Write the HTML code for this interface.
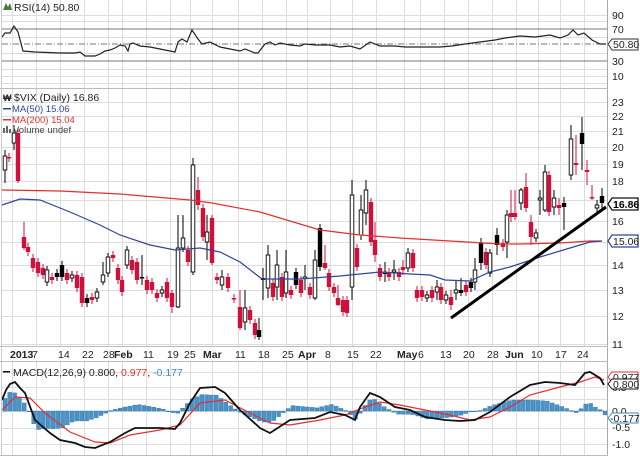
<!DOCTYPE html>
<html><head><meta charset="utf-8"><style>
html,body{margin:0;padding:0;background:#fff;width:640px;height:456px;overflow:hidden}
svg{display:block}
text{font-family:"Liberation Sans",sans-serif;font-size:10.5px}
</style></head><body>
<svg id="s" width="640" height="456" xmlns="http://www.w3.org/2000/svg">
<rect width="640" height="456" fill="#fff"/>
<g id="grid" stroke="#dcdcdc" stroke-width="1"></g>
<g id="g"></g>
<!-- RSI -->
<line x1="2" y1="29" x2="607" y2="29" stroke="#777"/>
<line x1="2" y1="61" x2="607" y2="61" stroke="#777"/>
<line x1="2" y1="44" x2="607" y2="44" stroke="#777" stroke-dasharray="6,2,1,2"/>
<polyline id="rsi" fill="none" stroke="#222" stroke-width="1.2"/>
<g id="cd"></g>
<polyline id="ma200" fill="none" stroke="#e03030" stroke-width="1.2"/>
<polyline id="ma50" fill="none" stroke="#334499" stroke-width="1.2"/>
<line x1="451" y1="318" x2="606" y2="207" stroke="#000" stroke-width="3"/>
<g id="hist"></g>
<polyline id="sig" fill="none" stroke="#e03030" stroke-width="1.2"/>
<polyline id="macd" fill="none" stroke="#111" stroke-width="1.8"/>
<!-- borders -->
<line x1="607.5" y1="0" x2="607.5" y2="456" stroke="#aaa"/>
<line x1="1.5" y1="0" x2="1.5" y2="456" stroke="#ccc"/>
<line x1="0" y1="88.5" x2="608" y2="88.5" stroke="#bbb"/>
<line x1="0" y1="346.5" x2="608" y2="346.5" stroke="#bbb"/>
<line x1="0" y1="361.5" x2="608" y2="361.5" stroke="#bbb"/>
<line x1="0" y1="455.5" x2="608" y2="455.5" stroke="#bbb"/>
<!-- legends -->
<path d="M3 10 L6 3 L8 7 L10 3 L12 10 Z" fill="#4a7a3a"/>
<text x="14" y="11" fill="#222">RSI(14) 50.80</text>
<text x="3" y="101" fill="#222" font-weight="bold" style="font-size:9px">₩</text>
<text x="14" y="101" fill="#222">$VIX (Daily) 16.86</text>
<rect x="3" y="108" width="8" height="1.5" fill="#334499"/>
<text x="12" y="112" fill="#334499" style="font-size:9.5px">MA(50) 15.06</text>
<rect x="3" y="119" width="8" height="1.5" fill="#e03030"/>
<text x="12" y="123" fill="#e03030" style="font-size:9.5px">MA(200) 15.04</text>
<rect x="3" y="128" width="2" height="5" fill="#666"/><rect x="6" y="126" width="2" height="7" fill="#666"/><rect x="9" y="129" width="2" height="4" fill="#666"/>
<text x="13" y="133" fill="#444" style="font-size:9.5px">Volume undef</text>
<rect x="3" y="371" width="7" height="1.5" fill="#111"/>
<text x="13" y="376" fill="#222">MACD(12,26,9) 0.800, <tspan fill="#e03030">0.977</tspan>, <tspan fill="#3a8ac0">-0.177</tspan></text>
<!-- right axis -->
<g fill="#222">
<text x="612" y="19">90</text><text x="612" y="33">70</text><text x="612" y="65">30</text><text x="612" y="80">10</text>
<text x="612" y="106">23</text><text x="612" y="120">22</text><text x="612" y="135">21</text><text x="612" y="151">20</text><text x="612" y="168">19</text><text x="612" y="185">18</text><text x="612" y="225">16</text><text x="612" y="269">14</text><text x="612" y="294">13</text><text x="612" y="320">12</text><text x="612" y="348">11</text>
<text x="612" y="391">0.5</text><text x="612" y="431">-0.5</text><text x="612" y="448">-1.0</text>
</g>
<g>
<path d="M608 44 L612 39 L638 39 L638 50 L612 50 Z" fill="#fff" stroke="#333"/><text x="613" y="48" fill="#222">50.80</text>
<path d="M608 204 L612 198 L638 198 L638 210 L612 210 Z" fill="#fff" stroke="#111" stroke-width="1.3"/><text x="613" y="208" fill="#000" font-weight="bold">16.86</text>
<path d="M608 241 L612 235 L638 235 L638 247 L612 247 Z" fill="#fff" stroke="#334499" stroke-width="1.3"/><text x="613" y="245" fill="#222">15.06</text>
<text x="612" y="415" fill="#222">0.0</text>
<path d="M608 377 L612 372 L638 372 L638 382 L612 382 Z" fill="#fff" stroke="#e03030"/><text x="613" y="381" fill="#222">0.977</text>
<path d="M608 384 L612 379 L638 379 L638 389 L612 389 Z" fill="#fff" stroke="#111"/><text x="613" y="388" fill="#222">0.800</text>
<path d="M608 418 L612 413 L638 413 L638 423 L612 423 Z" fill="#fff" stroke="#3a8ac0"/><text x="610" y="422" fill="#222">-0.177</text>
</g>
<g id="dates" fill="#222"></g>
</svg>
<script>
var NS="http://www.w3.org/2000/svg";
function el(p,t,a,txt){var e=document.createElementNS(NS,t);for(var k in a)e.setAttribute(k,a[k]);if(txt!=null)e.textContent=txt;document.getElementById(p).appendChild(e);return e;}
// grid
var vx=[12,36,60,84,108,122,146,170,190,212,238,262,286,307,330,352,376,404,420,444,468,492,516,538,560,584];
vx.forEach(function(x){el("grid","line",{x1:x+.5,y1:0,x2:x+.5,y2:346});el("grid","line",{x1:x+.5,y1:362,x2:x+.5,y2:456});});
[15,76,21,37,53,69,83].forEach(function(y){el("grid","line",{x1:2,y1:y+.5,x2:607,y2:y+.5});});
[102,116,131,147,164,181,200,221,242,265,290,316,344].forEach(function(y){el("grid","line",{x1:2,y1:y+.5,x2:607,y2:y+.5});});
[372,387,399,411,428,444].forEach(function(y){el("grid","line",{x1:2,y1:y+.5,x2:607,y2:y+.5});});
// dates
var d=[["2013",10,1],["7",32],["14",58],["22",82],["28",103],["Feb",114,1],["11",143],["19",167],["25",184],["Mar",203,1],["11",235],["18",258],["25",282],["Apr",298,1],["8",325],["15",347],["22",370],["May",397,1],["6",418],["13",440],["20",463],["28",487],["Jun",505,1],["10",531],["17",555],["24",577]];
d.forEach(function(a){el("dates","text",{x:a[1],y:358,"font-weight":a[2]?"bold":"normal"},a[0]);});
// polylines
function pl(id,pts){document.getElementById(id).setAttribute("points",pts.map(function(p){return p.join(",")}).join(" "));}
pl("rsi",[[2,37],[5,33],[10,33],[14,26],[18,32],[23,51],[35,52],[60,53],[75,53],[80,52],[85,56],[95,56],[100,54],[105,51],[110,50],[115,48],[120,45],[125,46],[128,51],[130,44],[133,43],[140,46],[150,47],[170,51],[175,52],[178,42],[182,39],[187,42],[192,30],[198,39],[202,44],[210,42],[220,47],[240,51],[245,49],[255,53],[258,53],[265,44],[270,42],[275,45],[280,43],[290,45],[300,46],[305,44],[315,45],[330,45],[340,47],[350,46],[360,49],[370,42],[380,46],[395,46],[405,47],[420,47],[440,47],[452,46],[465,44],[480,42],[495,40],[505,38],[520,36],[535,37],[550,35],[560,38],[568,35],[573,30],[578,35],[584,33],[592,40],[600,44],[606,44]]);
pl("ma200",[[2,190],[60,191],[120,194],[190,200],[212,203],[260,212],[320,230],[360,235],[400,238],[450,241],[500,244],[520,244],[560,243],[590,241],[602,241]]);
pl("ma50",[[2,205],[20,199],[40,200],[70,212],[100,225],[120,235],[150,245],[175,250],[200,248],[220,252],[240,262],[262,279],[300,279],[340,276],[380,272],[410,274],[430,275],[445,280],[470,281],[490,272],[510,267],[540,257],[570,248],[590,242],[602,241]]);
var M=[[2,400],[6,390],[10,384],[15,382],[20,388],[25,393],[35,420],[50,433],[60,440],[75,443],[85,447],[95,448],[110,442],[125,433],[135,428],[160,428],[175,429],[180,423],[190,403],[200,388],[215,387],[225,393],[240,410],[260,428],[270,433],[290,420],[315,418],[330,412],[345,415],[355,420],[360,407],[370,393],[380,397],[395,407],[410,410],[425,417],[445,420],[460,421],[475,420],[490,412],[510,397],[530,385],[545,382],[560,383],[575,385],[585,373],[590,372],[600,378],[604,385]];
var S=[[2,410],[15,397],[30,398],[45,413],[70,432],[95,442],[110,443],[130,435],[160,430],[180,425],[200,403],[225,400],[250,413],[270,423],[290,425],[320,420],[345,415],[365,407],[380,402],[400,405],[425,410],[450,415],[470,420],[490,417],[510,407],[530,395],[560,387],[580,382],[595,377],[604,380]];
pl("macd",M);pl("sig",S);
function interp(A,x){for(var i=1;i<A.length;i++){if(x<=A[i][0]){var a=A[i-1],b=A[i];return a[1]+(b[1]-a[1])*(x-a[0])/(b[0]-a[0]);}}return A[A.length-1][1];}
for(var x=3;x<604;x+=4.8){var h=(interp(S,x)-interp(M,x))*1.1;var y0=411;var y1=y0-h;el("hist","rect",{x:x.toFixed(1),y:Math.min(y0,y1).toFixed(1),width:4,height:Math.max(.8,Math.abs(h)).toFixed(1),fill:"#4a93c8",stroke:"#2f6e9e","stroke-width":.4});}
// candles [x,top,bottom,type(w/r/b),wickTop,wickBot]
var C=[[5,156,170,"w",150,183],[9,157,158,"r",153,162],[14,133,143,"w",125,150],[18,133,181,"r",128,183],[24,237,248,"r",222,250],[28,247,252,"r"],[33,258,268,"r"],[38,262,273,"r"],[43,268,275,"r"],[47,270,282,"w"],[52,277,280,"r"],[57,273,277,"b"],[62,265,277,"b"],[67,273,280,"r"],[72,275,278,"w"],[77,275,288,"r"],[82,277,303,"r"],[87,298,303,"b"],[92,297,300,"r"],[97,292,298,"w"],[103,275,282,"w",262,285],[108,257,273,"w"],[113,255,258,"r"],[118,268,280,"r"],[122,280,292,"r"],[127,250,265,"w"],[132,260,270,"r"],[137,262,280,"r"],[142,277,278,"b",255,285],[147,280,290,"r"],[152,282,290,"r"],[157,293,298,"r"],[162,290,293,"w"],[167,282,298,"r"],[172,293,307,"r",290,313],[178,248,307,"w",215,308],[183,238,248,"w",215,252],[188,250,262,"r"],[193,165,272,"w",158,275],[198,190,205,"r",177,210],[203,208,237,"r"],[207,232,242,"w",215,260],[212,218,263,"r",215,265],[217,277,280,"r"],[222,277,285,"w",270,290],[228,277,288,"r"],[234,298,299,"r"],[240,307,328,"r",290,330],[245,308,322,"w",290,330],[250,310,320,"r"],[255,323,335,"r"],[259,330,337,"b",318,340],[263,278,280,"b",268,300],[268,255,288,"w",245,298],[273,283,297,"r"],[277,265,287,"w",250,300],[282,277,297,"r"],[286,272,293,"w",250,298],[291,290,295,"r"],[296,272,285,"b"],[301,280,293,"r"],[305,277,278,"w",265,290],[310,287,295,"r"],[315,260,298,"w",250,300],[320,228,267,"b"],[325,263,268,"r",245,270],[329,273,287,"r"],[334,287,293,"r"],[338,298,305,"r",285,306],[343,300,312,"r"],[347,300,313,"r"],[352,195,287,"w",180,300],[357,248,267,"r"],[361,210,235,"w",195,240],[366,190,213,"w",180,225],[371,202,242,"r"],[375,240,255,"r",222,262],[380,268,277,"r"],[385,272,273,"w",262,282],[389,272,277,"r"],[394,270,272,"w",260,280],[399,272,277,"r"],[403,267,270,"r",260,275],[408,253,268,"w",248,272],[413,253,268,"r"],[417,290,298,"r"],[422,290,297,"r"],[427,295,298,"w"],[432,290,298,"r"],[437,287,292,"w",280,300],[441,287,300,"r"],[446,295,300,"w"],[451,297,305,"r",290,310],[456,290,293,"w",280,300],[461,290,293,"b",278,296],[466,285,292,"r"],[471,282,288,"b"],[475,270,282,"w",258,290],[481,243,263,"b",238,270],[486,252,265,"r"],[490,253,273,"w"],[497,235,245,"b",228,255],[503,243,247,"r"],[507,215,242,"w",210,258],[511,213,217,"r",190,222],[515,213,217,"r",190,220],[521,190,203,"w",188,210],[526,187,208,"r",173,212],[531,222,237,"r",215,245],[536,233,238,"w"],[540,198,200,"w",190,215],[545,172,210,"w",165,212],[549,175,212,"r"],[554,198,207,"w",190,215],[559,205,208,"r",198,215],[564,203,207,"b",197,230],[571,139,175,"w",125,180],[576,163,165,"r",135,175],[582,133,144,"b",117,170],[587,170,172,"r",160,185],[592,197,198,"r",185,200],[597,205,208,"w",200,212],[602,196,203,"b",188,210]];
C.forEach(function(c){var x=c[0],t=c[1],b=c[2],ty=c[3],wt=c[4]||t-4,wb=c[5]||b+4;
var col=ty=="r"?"#d0103a":"#000";
el("cd","line",{x1:x,y1:wt,x2:x,y2:wb,stroke:col,"stroke-width":1});
var hgt=Math.max(1.5,b-t);
if(ty=="w")el("cd","rect",{x:x-1.8,y:t,width:3.6,height:hgt,fill:"#fff",stroke:"#000","stroke-width":.9});
else el("cd","rect",{x:x-2.2,y:t,width:4.4,height:hgt,fill:col});});
</script>
</body></html>
